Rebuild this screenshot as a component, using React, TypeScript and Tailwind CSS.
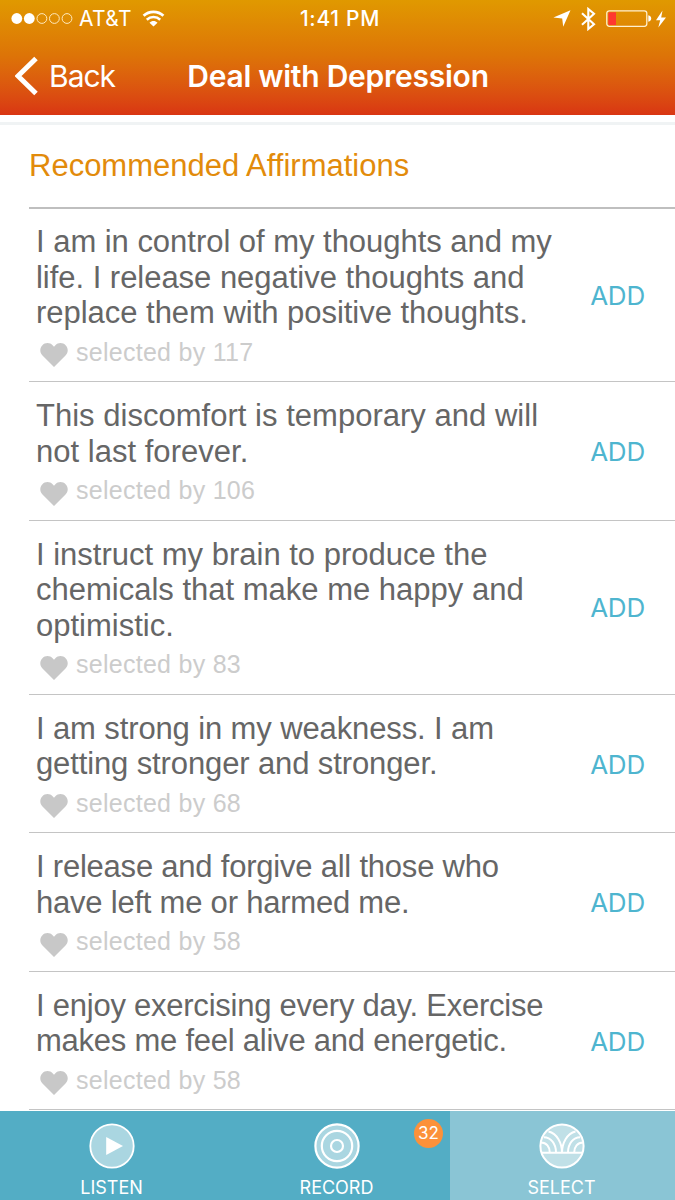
import React from 'react';

interface Affirmation {
  id: number;
  lines: string[];
  count: number;
  tracking: string;
}

const affirmations: Affirmation[] = [
  {
    id: 1,
    lines: ['I am in control of my thoughts and my', 'life. I release negative thoughts and', 'replace them with positive thoughts.'],
    count: 117,
    tracking: 'tracking-[-0.03px]',
  },
  {
    id: 2,
    lines: ['This discomfort is temporary and will', 'not last forever.'],
    count: 106,
    tracking: 'tracking-[0.02px]',
  },
  {
    id: 3,
    lines: ['I instruct my brain to produce the', 'chemicals that make me happy and', 'optimistic.'],
    count: 83,
    tracking: 'tracking-normal',
  },
  {
    id: 4,
    lines: ['I am strong in my weakness. I am', 'getting stronger and stronger.'],
    count: 68,
    tracking: 'tracking-[-0.12px]',
  },
  {
    id: 5,
    lines: ['I release and forgive all those who', 'have left me or harmed me.'],
    count: 58,
    tracking: 'tracking-[-0.22px]',
  },
  {
    id: 6,
    lines: ['I enjoy exercising every day. Exercise', 'makes me feel alive and energetic.'],
    count: 58,
    tracking: 'tracking-[-0.24px]',
  },
];

const StatusBar: React.FC = () => (
  <div className="grid h-9 grid-cols-3 items-center pt-px leading-none">
    <div className="flex items-center pl-[11px]">
      <svg className="h-[13px] w-[62px]" viewBox="0 0 62 13">
        <circle cx="5.8" cy="6.5" r="5.4" fill="white" />
        <circle cx="18.3" cy="6.5" r="5.4" fill="white" />
        <circle cx="30.9" cy="6.5" r="4.9" fill="none" stroke="#ffe9bd" />
        <circle cx="43.4" cy="6.5" r="4.9" fill="none" stroke="#ffe9bd" />
        <circle cx="56" cy="6.5" r="4.9" fill="none" stroke="#ffe9bd" />
      </svg>
      <span className="ml-[6px] w-[54px] text-[21px] tracking-[0.4px]">AT&T</span>
      <svg className="ml-[9px] h-[17px] w-[23px]" viewBox="0 0 23 17">
        <path d="M1.6 5.8C7 .5 16 .5 21.4 5.8" fill="none" stroke="white" strokeWidth="2.8" />
        <path d="M4.8 9.7C8.6 6.1 14.4 6.1 18.2 9.7" fill="none" stroke="white" strokeWidth="2.6" />
        <path d="M7.5 12.7C9.8 10.5 13.2 10.5 15.5 12.7L11.5 16.6Z" fill="white" />
      </svg>
    </div>
    <span className="pl-[5px] text-center text-[21px] font-medium tracking-[0.7px]">1:41 PM</span>
    <div className="flex items-center justify-end pr-[9px]">
      <svg className="h-[17px] w-[18px]" viewBox="0 0 18 17">
        <path d="M17.5.2L10.2 16.8L9.2 8.4L.4 7.4Z" fill="white" />
      </svg>
      <svg className="ml-[10px] h-[24px] w-[15px]" viewBox="0 0 15 24">
        <path d="M1 6.2L13 17.2L7.3 22V2L13 6.8L1 17.8" fill="none" stroke="white" strokeWidth="2.1" />
      </svg>
      <svg className="ml-[10px] h-[17px] w-[46px]" viewBox="0 0 46 17">
        <rect x=".8" y=".8" width="40" height="15.5" rx="2.5" fill="none" stroke="#fff0cf" strokeWidth="1.3" />
        <path d="M3.6 2.2H10V15H3.6Q2.3 15 2.3 13.5V3.7Q2.3 2.2 3.6 2.2Z" fill="#ff3830" />
        <path d="M42.3 5.3Q45.2 6 45.2 8.5T42.3 11.7Z" fill="white" />
      </svg>
      <svg className="ml-[4px] h-[18px] w-[10px]" viewBox="0 0 10 18">
        <path d="M6.5.5L0 10.2H4.2L2.3 17.5L10 7.4H5.2Z" fill="white" />
      </svg>
    </div>
  </div>
);

const Header: React.FC = () => (
  <header className="h-[115px] shrink-0 bg-linear-to-b from-[#e09900] via-[#dd7407] via-48% to-[#d93513] font-['Inter',sans-serif] text-white">
    <StatusBar />
    <div className="relative flex h-20 items-center justify-center">
      <button className="absolute left-[15px] flex h-20 items-center">
        <svg className="h-10 w-[23px]" viewBox="0 0 23 40">
          <path d="M21 2.5L3 20L21 37.5" fill="none" stroke="white" strokeWidth="5" />
        </svg>
        <span className="ml-[11px] text-[30px] tracking-[-1px]">Back</span>
      </button>
      <h1 className="pl-px text-[30px] font-semibold tracking-[-0.25px]">Deal with Depression</h1>
    </div>
  </header>
);

const AffirmationRow: React.FC<{ item: Affirmation }> = ({ item }) => (
  <li className="flex items-center border-b border-[#c4c4c4] pt-4 pr-[30px] pb-[12.5px] pl-[7px]">
    <div className="flex-1">
      <p className={`text-[31px] leading-[35.5px] whitespace-nowrap text-[#666] ${item.tracking}`}>
        {item.lines.map((line) => (
          <span key={line} className="block">{line}</span>
        ))}
      </p>
      <p className="mt-[6px] flex h-8 items-center text-[25px] tracking-[0.27px] text-[#ccc]">
        <svg className="mt-[5px] mr-2 ml-1 h-6 w-7" viewBox="0 0 28 24">
          <path d="M14 24L2.5 12.5C-.5 9.5-.3 5 2.2 2.4C5-.6 10-.6 12.6 2.2L14 3.8L15.4 2.2C18-.6 23-.6 25.8 2.4C28.3 5 28.5 9.5 25.5 12.5Z" fill="#c8c8c8" />
        </svg>
        selected by {item.count}
      </p>
    </div>
    <button className="pb-[2px] font-['Inter',sans-serif] text-[26px] tracking-[-0.2px] text-[#4eb5cf]">ADD</button>
  </li>
);

const ListenIcon: React.FC = () => (
  <svg className="h-[46px] w-[46px]" viewBox="0 0 46 46">
    <circle cx="23" cy="23" r="21.7" fill="#aad6e1" stroke="white" strokeWidth="1.8" />
    <path d="M17.2 14L34 23L17.2 32Z" fill="white" />
  </svg>
);

const RecordIcon: React.FC = () => (
  <svg className="h-[46px] w-[46px]" viewBox="0 0 46 46" stroke="white" strokeWidth="2.2">
    <circle cx="23" cy="23" r="21.6" fill="#aad6e1" />
    <circle cx="23" cy="23" r="15.2" fill="none" />
    <circle cx="23" cy="23" r="6" fill="none" />
  </svg>
);

const SelectIcon: React.FC = () => (
  <svg className="h-[46px] w-[46px]" viewBox="0 0 46 46" fill="none" stroke="white" strokeWidth="2">
    <circle cx="23" cy="23" r="21.6" fill="#c0e0e7" />
    <path d="M2.5 29.8H43.5" />
    <path d="M9.5 8.5C18 10.5 23 20 23 29.8C23 20 28 10.5 36.5 8.5" />
    <path d="M4.8 14.2C12 14.2 17 21 17 29.5M2 19.5C7.5 19.5 10.8 24 10.8 29.5" />
    <path d="M41.2 14.2C34 14.2 29 21 29 29.5M44 19.5C38.5 19.5 35.2 24 35.2 29.5" />
  </svg>
);

const TabBar: React.FC = () => {
  const tabs = [
    { label: 'LISTEN', icon: <ListenIcon />, active: false, badge: null },
    { label: 'RECORD', icon: <RecordIcon />, active: false, badge: 32 },
    { label: 'SELECT', icon: <SelectIcon />, active: true, badge: null },
  ];

  return (
    <nav className="grid h-[89px] shrink-0 grid-cols-3 font-['Inter',sans-serif] text-white">
      {tabs.map((tab) => (
        <button
          key={tab.label}
          className={`relative flex flex-col items-center pt-3 pr-[2px] ${tab.active ? 'bg-[#8ac5d5]' : 'bg-[#53adc5]'}`}
        >
          {tab.icon}
          <span className="mt-[9px] text-[18px] leading-5 tracking-normal">{tab.label}</span>
          {tab.badge && (
            <span className="absolute top-2 right-[7px] flex h-[29px] w-[29px] items-center justify-center rounded-full bg-[#fc913a] text-[17px]">
              {tab.badge}
            </span>
          )}
        </button>
      ))}
    </nav>
  );
};

const App: React.FC = () => {
  return (
    <div className="flex h-[1200px] w-[675px] flex-col overflow-hidden bg-white font-['Liberation_Sans',Arial,sans-serif]">
      <Header />
      <main className="flex-1 overflow-hidden">
        <div className="mt-[7px] h-[3px] bg-[#f0f3f4]" />
        <h2 className="ml-[29px] flex h-[84px] items-center border-b-2 border-[#bfbfbf] text-[31px] text-[#e28b0b]">
          Recommended Affirmations
        </h2>
        <ul className="-mt-px ml-[29px]">
          {affirmations.map((item) => (
            <AffirmationRow key={item.id} item={item} />
          ))}
        </ul>
      </main>
      <TabBar />
    </div>
  );
};

export default App;
